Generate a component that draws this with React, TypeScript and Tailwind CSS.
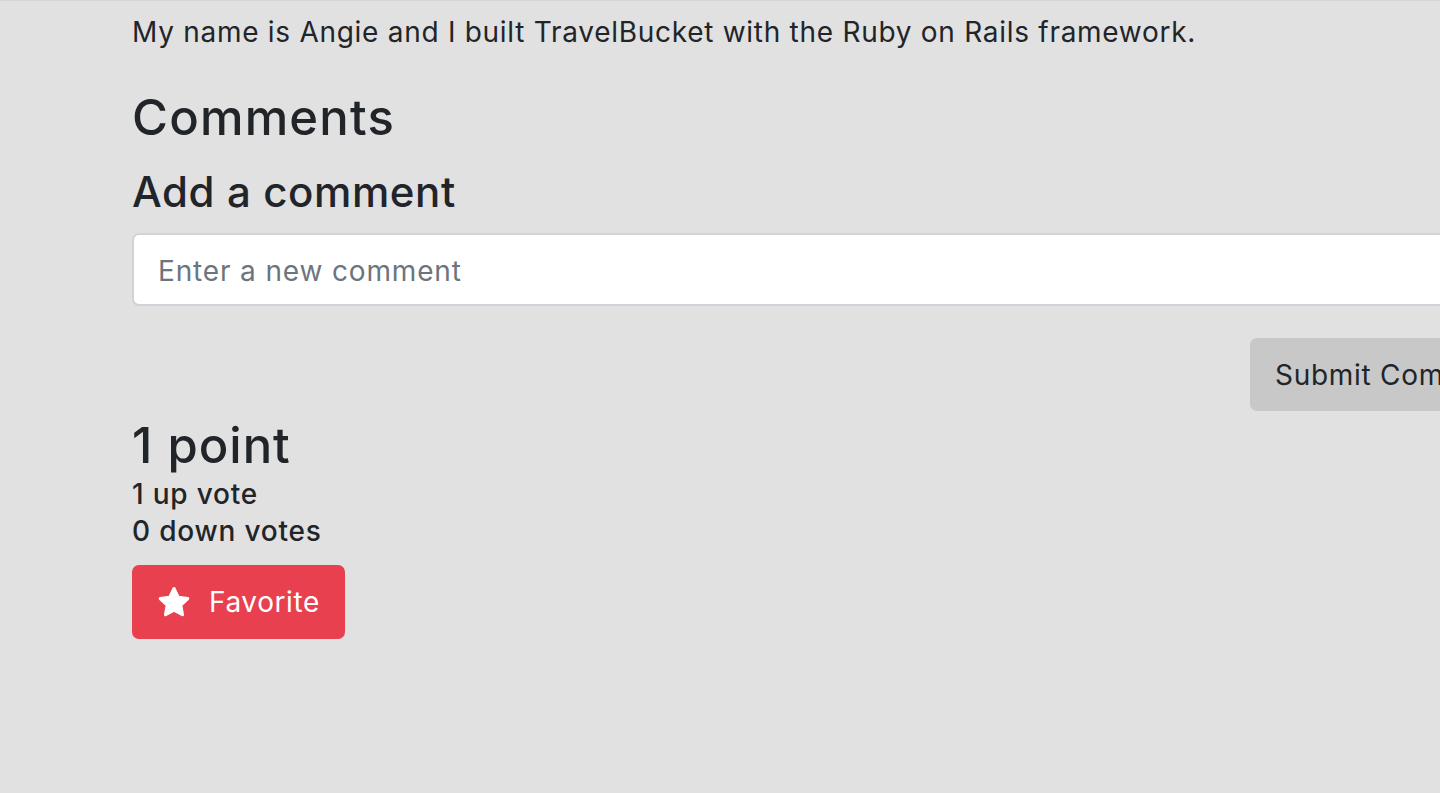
import React from 'react';

const StarIcon: React.FC = () => (
  <svg width="34" height="32" viewBox="0 0 24 23" className="shrink-0">
    <path
      d="M12 1.8l3 6.3 6.9.9-5 4.8 1.2 6.8L12 17.3l-6.1 3.3 1.2-6.8-5-4.8 6.9-.9z"
      fill="#ffffff"
      stroke="#ffffff"
      strokeWidth="2.2"
      strokeLinejoin="round"
    />
  </svg>
);

const App: React.FC = () => {
  return (
    <div
      className="min-h-[793px] w-[1440px] overflow-hidden bg-[#e1e1e1] border-t border-[#d2d6da] text-[#212529]"
      style={{ fontFamily: 'Inter, "Noto Sans", sans-serif' }}
    >
      <div className="pl-[132px]">
        <p className="text-[28px] leading-[42px] pt-[10px] tracking-[0.72px]">
          My name is Angie and I built TravelBucket with the Ruby on Rails framework.
        </p>

        <h3 className="text-[49px] leading-[59px] font-medium mt-[35px] tracking-[1.2px]">Comments</h3>
        <h4 className="text-[42px] leading-[50px] font-medium mt-[20px] tracking-[0.6px]">Add a comment</h4>

        <form className="mt-[16px]" onSubmit={(e) => e.preventDefault()}>
          <input
            type="text"
            placeholder="Enter a new comment"
            className="block w-[1340px] h-[73px] bg-white border-2 border-[#ced4da] rounded-[7px] px-[24px] pt-[3px] text-[28px] tracking-[0.85px] placeholder:text-[#6c757d] outline-none"
          />
          <div className="flex mt-[32px]">
            <button
              type="submit"
              className="ml-[1118px] h-[73px] w-[300px] shrink-0 bg-[#c8c8c8] rounded-[7px] text-left pl-[25px] text-[28px] tracking-[0.72px] text-[#212529] whitespace-nowrap"
            >
              Submit Comment
            </button>
          </div>
        </form>

        <h3 className="text-[49px] leading-[56px] font-medium mt-[7px] tracking-[1px]">1 point</h3>
        <div className="text-[28px] leading-[37px] font-medium mt-[2px] tracking-[0.8px]">
          <p>1 up vote</p>
          <p>0 down votes</p>
        </div>

        <button className="mt-[15px] flex items-center gap-[18px] h-[74px] pl-[25px] pr-[25px] bg-[#e9404f] rounded-[7px] text-white text-[28px] tracking-[0.6px]">
          <StarIcon />
          <span>Favorite</span>
        </button>
      </div>
    </div>
  );
};

export default App;
